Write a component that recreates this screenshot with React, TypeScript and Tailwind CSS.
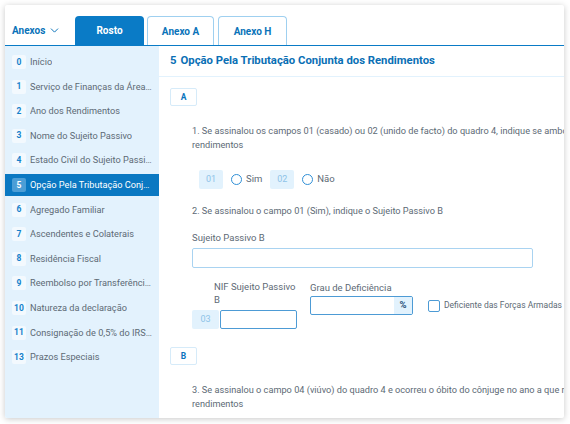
import { ChevronDown } from "lucide-react";

const sections = [
  { n: "0", label: "Início" },
  { n: "1", label: "Serviço de Finanças da Área de Residência" },
  { n: "2", label: "Ano dos Rendimentos" },
  { n: "3", label: "Nome do Sujeito Passivo" },
  { n: "4", label: "Estado Civil do Sujeito Passivo" },
  { n: "5", label: "Opção Pela Tributação Conjunta dos Rendimentos" },
  { n: "6", label: "Agregado Familiar" },
  { n: "7", label: "Ascendentes e Colaterais" },
  { n: "8", label: "Residência Fiscal" },
  { n: "9", label: "Reembolso por Transferência Bancária" },
  { n: "10", label: "Natureza da declaração" },
  { n: "11", label: "Consignação de 0,5% do IRS / Benefício Fiscal" },
  { n: "13", label: "Prazos Especiais" },
];

const activeSection = "5";

function FieldNum({ n, w = "w-[24px]" }: { n: string; w?: string }) {
  return (
    <div className={`${w} h-[19px] shrink-0 flex items-center justify-center bg-[#e2f2fd] text-[9px] text-[#8ec3e8] rounded-[2px]`}>
      {n}
    </div>
  );
}

function Radio({ label }: { label: string }) {
  return (
    <label className="flex items-center gap-[4px] cursor-pointer">
      <span className="w-[11px] h-[11px] rounded-full border-[1.3px] border-[#2f8fd6] bg-white" />
      <span className="text-[9.5px] text-[#5d6a75]">{label}</span>
    </label>
  );
}

function LetterBox({ letter }: { letter: string }) {
  return (
    <div className="w-[27px] h-[18px] flex items-center justify-center border border-[#d6ebf9] rounded-[2px] text-[8.5px] font-bold text-[#0a74bd]">
      {letter}
    </div>
  );
}

export default function App() {
  return (
    <div className="w-[570px] h-[424px] bg-white p-[5px] font-['Roboto',sans-serif]">
      <div className="w-[559px] h-[413px] bg-white rounded-[2px] shadow-[0_1px_6px_rgba(0,0,0,0.22)] overflow-hidden flex flex-col">
        {/* Header tabs */}
        <div className="h-[41px] shrink-0 flex items-end border-b-[1.5px] border-[#0a7bc6]">
          <button className="h-[29px] w-[63px] flex items-center gap-[3px] pl-[7px] text-[10px] font-bold text-[#0a73b9]">
            Anexos
            <ChevronDown size={13} strokeWidth={1.8} />
          </button>
          <div className="flex items-end gap-[3px] ml-[7px]">
            <button className="h-[29px] w-[69px] rounded-t-[4px] bg-[#0a7bc6] text-white text-[10px] font-bold">
              Rosto
            </button>
            <button className="h-[29px] w-[67px] rounded-t-[4px] border border-b-0 border-[#9fd0f0] bg-white text-[#0a73b9] text-[10px] font-bold">
              Anexo A
            </button>
            <button className="h-[29px] w-[69px] ml-[1px] rounded-t-[4px] border border-b-0 border-[#9fd0f0] bg-white text-[#0a73b9] text-[10px] font-bold">
              Anexo H
            </button>
          </div>
        </div>

        <div className="flex flex-1 min-h-0">
          {/* Sidebar */}
          <aside className="w-[154px] shrink-0 bg-[#e3f2fd] pt-[5px] flex flex-col gap-[2.6px]">
            {sections.map((s) => {
              const active = s.n === activeSection;
              return (
                <div
                  key={s.n}
                  className={`h-[22px] flex items-center gap-[4px] pl-[7px] pr-[7px] ${active ? "bg-[#0a78c2]" : ""}`}
                >
                  <span
                    className={`min-w-[14px] h-[14px] px-[2px] flex items-center justify-center rounded-[2px] text-[8.5px] font-bold ${
                      active ? "bg-[#4c9ed6] text-white" : "bg-[#f3f9fe] text-[#1581cb]"
                    }`}
                  >
                    {s.n}
                  </span>
                  <span className={`truncate text-[9.2px] ${active ? "text-white" : "text-[#5d6a75]"}`}>{s.label}</span>
                </div>
              );
            })}
          </aside>

          {/* Content */}
          <main className="flex-1 min-w-0 overflow-hidden">
            <div className="h-[31px] flex items-center pl-[11px] border-b border-[#e2f2fd] text-[11.3px] font-bold text-[#0a6fb5] whitespace-nowrap">
              <span className="w-[10.5px]">5</span>
              <span>Opção Pela Tributação Conjunta dos Rendimentos</span>
            </div>

            <div className="pl-[11px] pt-[11px]">
              <LetterBox letter="A" />

              <div className="pl-[22px]">
                <p className="mt-[18px] w-[550px] text-[9.2px] leading-[14px] text-[#5d6a75]">
                  1. Se assinalou os campos 01 (casado) ou 02 (unido de facto) do quadro 4, indique se ambos optam pela tributação conjunta dos rendimentos
                </p>

                <div className="mt-[18px] ml-[7px] flex items-center">
                  <FieldNum n="01" />
                  <div className="ml-[8px]">
                    <Radio label="Sim" />
                  </div>
                  <div className="ml-[8px]">
                    <FieldNum n="02" />
                  </div>
                  <div className="ml-[8px]">
                    <Radio label="Não" />
                  </div>
                </div>

                <p className="mt-[15px] text-[9.2px] leading-[14px] text-[#5d6a75] whitespace-nowrap">
                  2. Se assinalou o campo 01 (Sim), indique o Sujeito Passivo B
                </p>

                <p className="mt-[13px] text-[9.5px] leading-[14px] text-[#5d6a75]">Sujeito Passivo B</p>
                <div className="mt-[3px] w-[341px] h-[20px] rounded-[2px] border border-[#a9d3f1] bg-white" />

                <div className="mt-[12px] flex items-start">
                  <div className="flex items-end">
                    <FieldNum n="03" w="w-[27px]" />
                    <div className="flex flex-col">
                      <p className="-ml-[5px] w-[84px] text-[9.5px] leading-[13px] text-[#5d6a75]">NIF Sujeito Passivo B</p>
                      <div className="mt-[4px] ml-[1px] w-[77px] h-[19px] rounded-[2px] border-[1.3px] border-[#4d9bd5] bg-white" />
                    </div>
                  </div>

                  <div className="ml-[12px] flex flex-col">
                    <p className="mt-[1px] text-[9.5px] leading-[13px] text-[#5d6a75]">Grau de Deficiência</p>
                    <div className="mt-[2px] flex items-center gap-[15px]">
                      <div className="w-[103px] h-[19px] rounded-[2px] border-[1.3px] border-[#4d9bd5] bg-white flex justify-end overflow-hidden">
                        <span className="w-[18px] h-full bg-[#e2f2fd] flex items-center justify-center text-[9.5px] font-bold text-[#1f4f78]">
                          %
                        </span>
                      </div>
                      <label className="flex items-center gap-[4px] whitespace-nowrap">
                        <span className="w-[12px] h-[12px] rounded-[2px] border-[1.3px] border-[#4d9bd5] bg-white" />
                        <span className="text-[8.5px] text-[#5d6a75]">Deficiente das Forças Armadas</span>
                      </label>
                    </div>
                  </div>
                </div>
              </div>

              <div className="mt-[18px]">
                <LetterBox letter="B" />
              </div>

              <p className="mt-[18px] ml-[22px] w-[440px] text-[9.2px] leading-[14px] text-[#5d6a75]">
                3. Se assinalou o campo 04 (viúvo) do quadro 4 e ocorreu o óbito do cônjuge no ano a que respeitam os rendimentos
              </p>
            </div>
          </main>
        </div>
      </div>
    </div>
  );
}
